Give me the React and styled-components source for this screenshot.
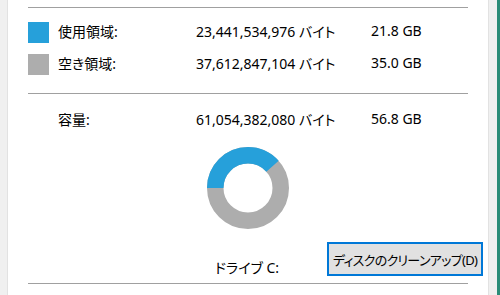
import React from 'react';
import styled, { createGlobalStyle } from 'styled-components';

const GlobalStyle = createGlobalStyle`
  html, body {
    margin: 0;
    padding: 0;
    background: #ffffff;
  }
  body {
    font-family: "Noto Sans", "Noto Sans CJK JP", sans-serif;
    font-feature-settings: "palt";
    color: #000000;
  }
`;

const Window = styled.div`
  display: flex;
  width: 500px;
  height: 295px;
  overflow: hidden;
`;

const SideStrip = styled.div`
  flex: 0 0 ${({ size }) => size}px;
  background: #f0f0f0;
  border-${({ edge }) => edge}: 1px solid #e2e2e2;
  box-sizing: border-box;
`;

const GreenEdge = styled.div`
  flex: 0 0 3px;
  background: #2b8c78;
`;

const Main = styled.div`
  flex: 1;
  min-width: 0;
  display: flex;
  flex-direction: column;
  padding: 7px 20px 0 20px;
  background: #ffffff;
`;

const Divider = styled.div`
  width: 440px;
  height: 1px;
  background: #a0a0a0;
  margin-top: ${({ mt }) => mt || 0}px;
`;

const InfoList = styled.div`
  display: flex;
  flex-direction: column;
  margin-top: ${({ mt }) => mt}px;
`;

const InfoRow = styled.div`
  display: grid;
  grid-template-columns: 30px 138px 175px auto;
  align-items: center;
  height: 32px;
  padding-bottom: 3px;
  box-sizing: border-box;
  font-size: 14px;
`;

const Swatch = styled.div`
  width: 21px;
  height: 21px;
  margin-top: 3px;
  background: ${({ color }) => color};
`;

const Cell = styled.span`
  white-space: nowrap;
`;

const DonutWrap = styled.div`
  display: flex;
  justify-content: center;
  width: 440px;
  margin-top: 11px;
`;

const Footer = styled.div`
  display: grid;
  grid-template-columns: 187px 112px 156px;
  align-items: start;
  margin-top: 13px;
  height: 34px;
`;

const DriveLabel = styled.span`
  grid-column: 2;
  font-size: 14px;
  line-height: 20px;
  margin-top: 16px;
  white-space: nowrap;
`;

const CleanupButton = styled.button`
  grid-column: 3;
  width: 156px;
  height: 34px;
  padding: 0;
  border: 2px solid #0078d7;
  background: #e1e1e1;
  font-family: "Noto Sans", "Noto Sans CJK JP", sans-serif;
  font-feature-settings: "palt";
  font-size: 13px;
  letter-spacing: -0.7px;
  color: #000000;
  white-space: nowrap;
`;

const Donut = ({ used, total }) => {
  const r = 32.75;
  const c = 2 * Math.PI * r;
  const usedLen = (used / total) * c;
  return (
    <svg width="82" height="82" viewBox="0 0 82 82">
      <g transform="rotate(180 41 41)">
        <circle cx="41" cy="41" r={r} fill="none" stroke="#adadad" strokeWidth="16.5" />
        <circle
          cx="41"
          cy="41"
          r={r}
          fill="none"
          stroke="#26a0da"
          strokeWidth="16.5"
          strokeDasharray={`${usedLen} ${c}`}
        />
      </g>
    </svg>
  );
};

const rows = [
  { color: '#26a0da', label: '使用領域:', bytes: '23,441,534,976 バイト', size: '21.8 GB' },
  { color: '#adadad', label: '空き領域:', bytes: '37,612,847,104 バイト', size: '35.0 GB' },
];

const App = () => (
  <>
    <GlobalStyle />
    <Window>
      <SideStrip size={8} edge="right" />
      <Main>
        <Divider />
        <InfoList mt={8}>
          {rows.map((row) => (
            <InfoRow key={row.label}>
              <Swatch color={row.color} />
              <Cell>{row.label}</Cell>
              <Cell>{row.bytes}</Cell>
              <Cell>{row.size}</Cell>
            </InfoRow>
          ))}
        </InfoList>
        <Divider mt={13} />
        <InfoList mt={10}>
          <InfoRow>
            <span />
            <Cell>容量:</Cell>
            <Cell>61,054,382,080 バイト</Cell>
            <Cell>56.8 GB</Cell>
          </InfoRow>
        </InfoList>
        <DonutWrap>
          <Donut used={21.8} total={56.8} />
        </DonutWrap>
        <Footer>
          <DriveLabel>ドライブ C:</DriveLabel>
          <CleanupButton>ディスクのクリーンアップ(D)</CleanupButton>
        </Footer>
        <Divider mt={7} />
      </Main>
      <SideStrip size={9} edge="left" />
      <GreenEdge />
    </Window>
  </>
);

export default App;
